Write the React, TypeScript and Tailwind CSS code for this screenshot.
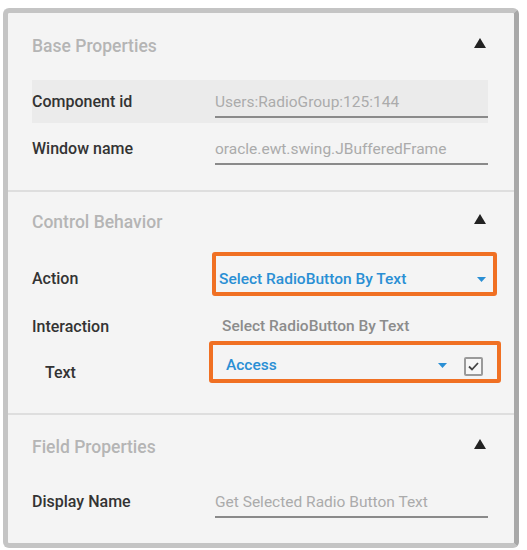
import React from "react";

const font = { fontFamily: "Roboto, 'Liberation Sans', sans-serif" };

function Triangle() {
    return (
        <svg width="12" height="10" viewBox="0 0 12 10" className="mb-[7px]">
            <polygon points="6,0 12,10 0,10" fill="#222" />
        </svg>
    );
}

function Caret() {
    return (
        <svg width="9" height="6" viewBox="0 0 9 6">
            <polygon points="0,0 9,0 4.5,5" fill="#2a8fd4" />
        </svg>
    );
}

function Header({ title, h }: { title: string; h: string }) {
    return (
        <div className={`flex items-center justify-between pr-[2px] ${h}`}>
            <span className="text-[17.5px] font-medium text-[#b5b5b5]">{title}</span>
            <Triangle />
        </div>
    );
}

function Field({ label, value, shaded }: { label: string; value: string; shaded?: boolean }) {
    return (
        <div className={`flex items-end h-[43px] pb-[5px] ${shaded ? "bg-[#ebebeb]" : "mt-[4px]"}`}>
            <div className="w-[183px] text-[16px] font-medium text-[#333] leading-[20px] pb-[6px]">{label}</div>
            <div className="flex-1 text-[15.5px] text-[#ababab] leading-[20px] pb-[4px] border-b-2 border-[#8a8a8a]">
                {value}
            </div>
        </div>
    );
}

export default function App() {
    return (
        <div className="w-[527px] h-[550px] bg-white pt-[8px] pl-[3px]" style={font}>
            <div className="w-[516px] h-[540px] border-[5px] border-[#c4c4c4] border-r-[#a8a8a8] rounded-[6px] bg-[#f4f4f4] flex flex-col overflow-hidden">
                {/* base properties */}
                <div className="pl-6 pr-[26px] pb-[20px]">
                    <Header title="Base Properties" h="h-[67px]" />
                    <Field label="Component id" value="Users:RadioGroup:125:144" shaded />
                    <Field label="Window name" value="oracle.ewt.swing.JBufferedFrame" />
                </div>
                <div className="h-[2px] bg-[#dedede]" />

                {/* control behavior */}
                <div className="pl-6 pr-[26px] pb-[30px]">
                    <Header title="Control Behavior" h="h-[60px]" />
                    <div className="flex items-center h-[44px]">
                        <div className="w-[180px] pt-[10px] text-[16px] font-medium text-[#333]">Action</div>
                        <div className="flex-1 mr-[-9px] h-[44px] border-4 border-[#f07023] rounded-[3px] flex items-center justify-between pt-3 pl-[3px] pr-[7px]">
                            <span className="text-[15.5px] font-medium text-[#2a8fd4]">Select RadioButton By Text</span>
                            <Caret />
                        </div>
                    </div>
                    <div className="flex items-center h-[45px] pt-[16px]">
                        <div className="w-[190px] text-[16px] font-medium text-[#333]">Interaction</div>
                        <span className="text-[15.5px] font-medium text-[#8c8c8c]">Select RadioButton By Text</span>
                    </div>
                    <div className="flex items-center h-[42px]">
                        <div className="w-[177px] pl-[13px] pt-[22px] text-[16px] font-medium text-[#333]">Text</div>
                        <div className="flex-1 mr-[-13px] h-[42px] border-4 border-[#f07023] rounded-[3px] flex items-center pt-[8px] pl-[13px] pr-[14px]">
                            <span className="flex-1 text-[15.5px] font-medium text-[#2a8fd4]">Access</span>
                            <Caret />
                            <div className="ml-[17px] w-[19px] h-[19px] border-2 border-[#9a9a9a] rounded-[2px] bg-[#f7f7f7] flex items-center justify-center">
                                <svg width="11" height="9" viewBox="0 0 11 9">
                                    <path d="M1 4.5 L4 7.5 L10 1" stroke="#444" strokeWidth="1.8" fill="none" />
                                </svg>
                            </div>
                        </div>
                    </div>
                </div>
                <div className="h-[2px] bg-[#dedede]" />

                {/* field properties */}
                <div className="pl-6 pr-[26px]">
                    <Header title="Field Properties" h="h-[65px]" />
                    <div className="flex items-end h-[43px] pb-[5px]">
                        <div className="w-[183px] text-[16px] font-medium text-[#333] leading-[20px] pb-[6px]">Display Name</div>
                        <div className="flex-1 text-[15.5px] text-[#ababab] leading-[20px] pb-[4px] border-b-2 border-[#8a8a8a]">
                            Get Selected Radio Button Text
                        </div>
                    </div>
                </div>
            </div>
        </div>
    );
}
